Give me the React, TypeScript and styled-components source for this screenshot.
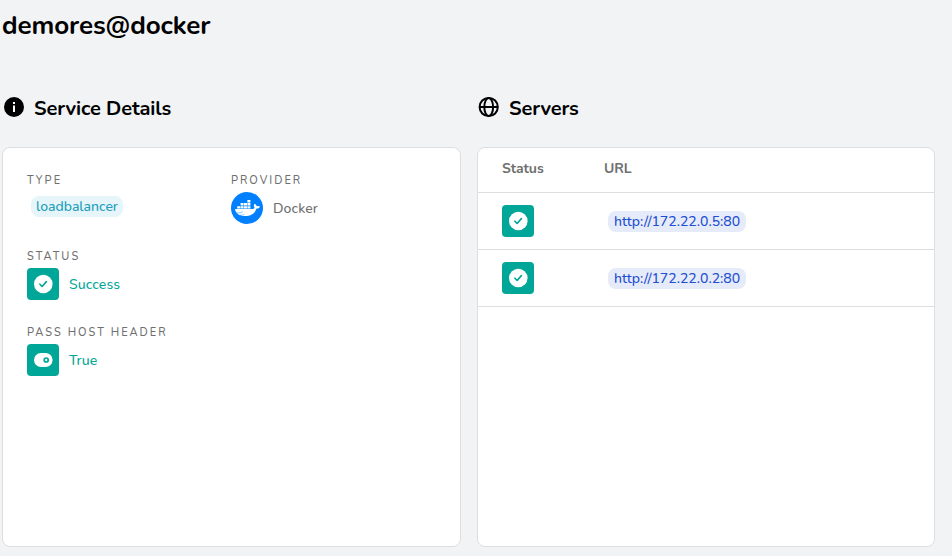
import React from 'react';
import styled, { createGlobalStyle } from 'styled-components';

const GlobalStyle = createGlobalStyle`
  * { box-sizing: border-box; }
  body {
    margin: 0;
    background: #f1f3f5;
    color: #000;
    font-family: Nunito, Lato, "Open Sans", sans-serif;
    font-size: 14px;
    overflow: hidden;
    -webkit-font-smoothing: antialiased;
  }
`;

const Page = styled.main`
  height: 556px;
  padding: 10px 17px 0 2px;
`;

const Title = styled.h1`
  margin: 0;
  height: 32px;
  font-size: 26px;
  line-height: 32px;
  font-weight: 700;
  letter-spacing: -0.1px;
`;

const Columns = styled.div`
  display: grid;
  grid-template-columns: 459px 458px;
  column-gap: 16px;
  margin-top: 53px;
`;

const SectionTitle = styled.h2`
  display: flex;
  align-items: center;
  gap: 8px;
  height: 24px;
  margin: 0 0 28px;
  font-size: 20px;
  font-weight: 700;
  letter-spacing: -0.12px;
  white-space: nowrap;
  svg { flex: none; }
  span { line-height: 24px; padding-top: 3px; }
`;

const Card = styled.section`
  height: 400px;
  background: #fff;
  border: 1px solid #dcdedf;
  border-radius: 8px;
  overflow: hidden;
`;

const Details = styled(Card)`
  padding: 24px;
  display: grid;
  grid-template-columns: 204px 1fr;
  grid-auto-rows: 52px;
  row-gap: 24px;
`;

const Item = styled.div<{ $full?: boolean }>`
  grid-column: ${(p) => (p.$full ? '1 / -1' : 'auto')};
`;

const Label = styled.div`
  height: 20px;
  font-size: 11px;
  line-height: 17px;
  font-weight: 500;
  letter-spacing: 2px;
  color: #6f6f6f;
  text-transform: uppercase;
`;

const Value = styled.div<{ $color: string }>`
  display: flex;
  align-items: center;
  gap: 10px;
  height: 32px;
  color: ${(p) => p.$color};
  font-weight: 500;
  letter-spacing: 0.12px;
`;

const Badge = styled.span<{ $blue?: boolean }>`
  display: flex;
  align-items: center;
  justify-content: center;
  width: ${(p) => (p.$blue ? 138 : 92)}px;
  height: 21px;
  margin: ${(p) => (p.$blue ? '0 0 0 4px' : '4px 0 0 4px')};
  border-radius: 8px;
  background: ${(p) => (p.$blue ? '#e6ebfa' : '#e6f5fa')};
  color: ${(p) => (p.$blue ? '#1d4fd0' : '#219ebc')};
  font-weight: 500;
  white-space: nowrap;
`;

const Tile = styled.span`
  display: grid;
  place-items: center;
  flex: none;
  width: 32px;
  height: 32px;
  border-radius: 4px;
  background: #00a697;
`;

const Provider = styled(Tile)`
  border-radius: 50%;
  background: #0080ff;
`;

const Row = styled.div<{ $head?: boolean }>`
  display: grid;
  grid-template-columns: 102px 1fr;
  align-items: center;
  height: ${(p) => (p.$head ? 45 : 57)}px;
  padding: ${(p) => (p.$head ? '0 24px 3px' : '0 24px')};
  border-bottom: 1px solid #dcdedf;
  color: #6f6f6f;
  font-weight: ${(p) => (p.$head ? 700 : 400)};
  letter-spacing: ${(p) => (p.$head ? -0.08 : 0)}px;
`;

const InfoIcon = () => (
  <svg width="24" height="24" viewBox="0 0 24 24">
    <circle cx="12" cy="12" r="10" fill="#000" />
    <path d="M11 7h2v2h-2zM11 10.5h2V17h-2z" fill="#fff" />
  </svg>
);

const GlobeIcon = () => (
  <svg width="24" height="24" viewBox="0 0 24 24" fill="none" stroke="#000" strokeWidth="2">
    <circle cx="11.7" cy="12" r="9.1" />
    <ellipse cx="11.7" cy="12" rx="4.4" ry="9.1" />
    <path d="M2.6 12h18.2" />
  </svg>
);

const DockerIcon = () => (
  <svg width="32" height="32" viewBox="0 0 32 32" fill="#fff">
    <path d="M16.4 8h3v2.5h-3zM9.6 11.1h3v2.5h-3zM13 11.1h3v2.5h-3zM16.4 11.1h3v2.5h-3zM6.2 14.2h3v2.3h-3zM9.6 14.2h3v2.3h-3zM13 14.2h3v2.3h-3zM16.4 14.2h3v2.3h-3z" />
    <path d="M4 17.1h16.3c1.9 0 3.1-.6 3.3-1.4-1-1.1-1-2.9-.1-4 1.3.6 2 1.5 2.2 2.5 1.1-.5 2.4-.3 3.3.2-.5 1.5-1.9 2.2-3.4 2.2-2 4.8-5.5 7.5-11.7 7.5-5.7 0-9.2-2.3-9.9-7z" />
    <path d="M5.2 20.9c3 .4 5.2-.2 6.7-1.3M9 23.2c2 .1 3.3-.2 4.4-.9" fill="none" stroke="#0080ff" strokeWidth=".5" />
  </svg>
);

const CheckTile = () => (
  <Tile>
    <svg width="24" height="24" viewBox="0 0 24 24">
      <circle cx="12.3" cy="12" r="9.3" fill="#fff" />
      <path d="m8.9 12.2 2.2 2.3 4.3-4.9" fill="none" stroke="#00a697" strokeWidth="1.6" strokeLinecap="round" strokeLinejoin="round" />
    </svg>
  </Tile>
);

const ToggleTile = () => (
  <Tile>
    <svg width="24" height="24" viewBox="0 0 24 24">
      <rect x="3" y="5" width="18.6" height="14" rx="7" fill="#fff" />
      <circle cx="15.2" cy="12" r="2" fill="none" stroke="#00a697" strokeWidth="1.7" />
    </svg>
  </Tile>
);

const servers = ['http://172.22.0.5:80', 'http://172.22.0.2:80'];

export default function App() {
  return (
    <Page>
      <GlobalStyle />
      <Title>demores@docker</Title>
      <Columns>
        <div>
          <SectionTitle><InfoIcon /><span>Service Details</span></SectionTitle>
          <Details>
            <Item>
              <Label>Type</Label>
              <Badge>loadbalancer</Badge>
            </Item>
            <Item>
              <Label>Provider</Label>
              <Value $color="#6f6f6f"><Provider><DockerIcon /></Provider>Docker</Value>
            </Item>
            <Item $full>
              <Label>Status</Label>
              <Value $color="#00a697"><CheckTile />Success</Value>
            </Item>
            <Item $full>
              <Label>Pass Host Header</Label>
              <Value $color="#00a697"><ToggleTile />True</Value>
            </Item>
          </Details>
        </div>
        <div>
          <SectionTitle><GlobeIcon /><span>Servers</span></SectionTitle>
          <Card>
            <Row $head><span>Status</span><span>URL</span></Row>
            {servers.map((url) => (
              <Row key={url}><CheckTile /><Badge $blue>{url}</Badge></Row>
            ))}
          </Card>
        </div>
      </Columns>
    </Page>
  );
}
